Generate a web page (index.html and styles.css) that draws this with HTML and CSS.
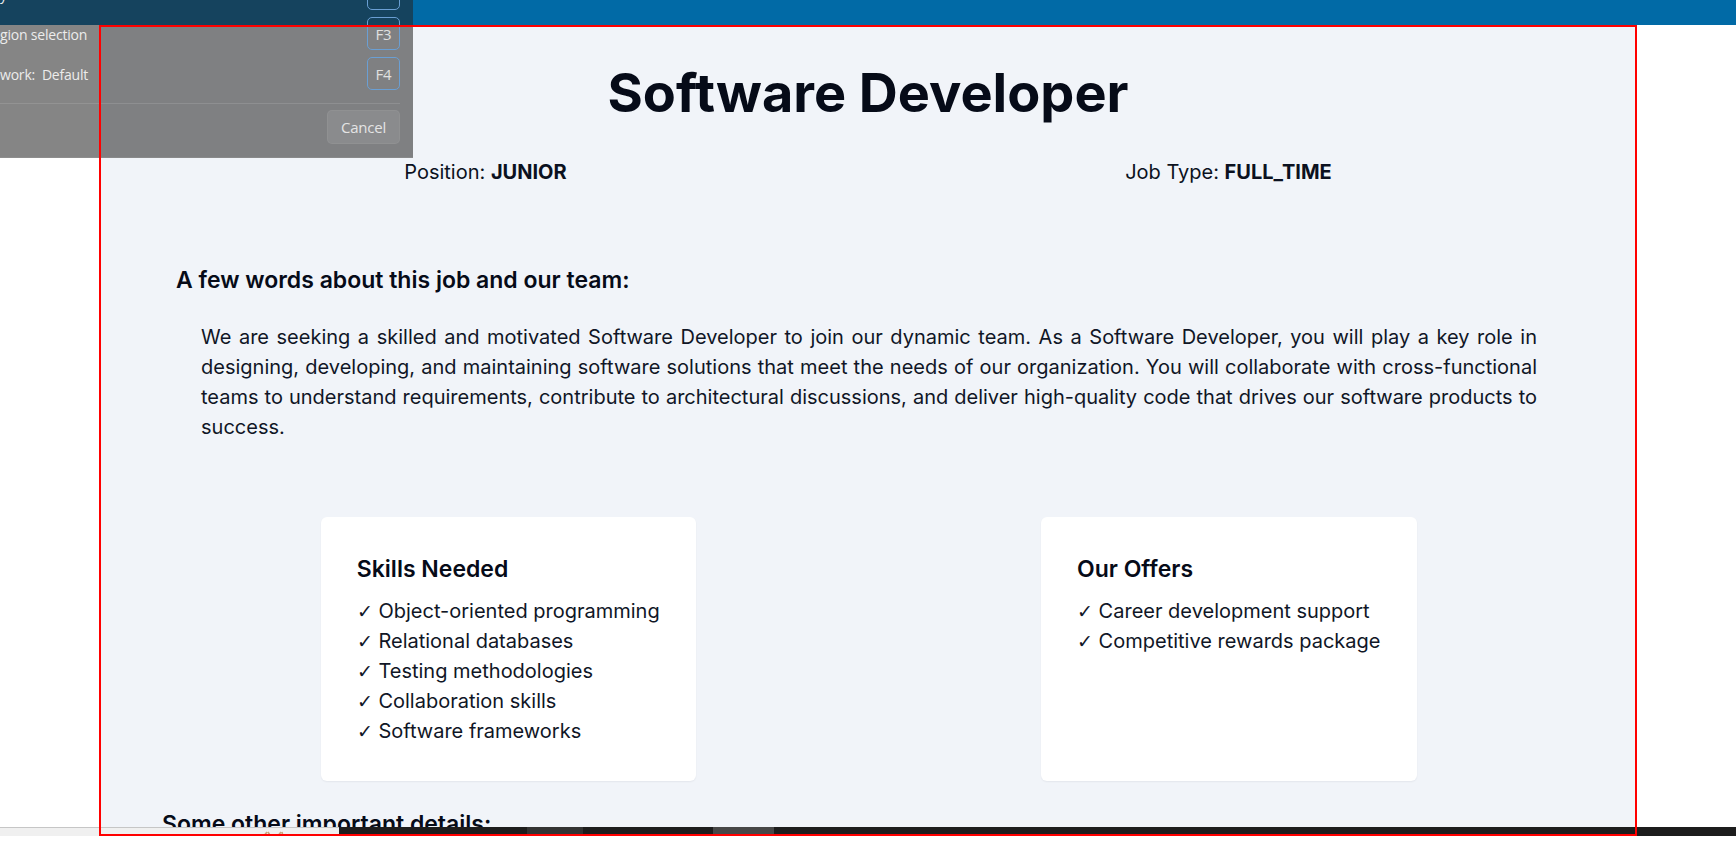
FILE: index.html
```html
<!DOCTYPE html>
<html lang="en">
<head>
<meta charset="utf-8">
<title>Software Developer</title>
<link rel="stylesheet" href="styles.css">
</head>
<body>
<div class="screen">
  <header class="topbar"></header>

  <main class="job">
    <h1 class="job-title">Software Developer</h1>
    <div class="meta">
      <div class="meta-item">Position: <b>JUNIOR</b></div>
      <div class="meta-item">Job Type: <b>FULL_TIME</b></div>
    </div>

    <h2 class="section-title about-title">A few words about this job and our team:</h2>
    <p class="about-text">We are seeking a skilled and motivated Software Developer to join our dynamic team. As a Software Developer, you will play a key role in designing, developing, and maintaining software solutions that meet the needs of our organization. You will collaborate with cross-functional teams to understand requirements, contribute to architectural discussions, and deliver high-quality code that drives our software products to success.</p>

    <div class="cards">
      <section class="card">
        <h3 class="card-title">Skills Needed</h3>
        <ul class="card-list">
          <li><span class="tick">✓</span> Object-oriented programming</li>
          <li><span class="tick">✓</span> Relational databases</li>
          <li><span class="tick">✓</span> Testing methodologies</li>
          <li><span class="tick">✓</span> Collaboration skills</li>
          <li><span class="tick">✓</span> Software frameworks</li>
        </ul>
      </section>
      <section class="card">
        <h3 class="card-title">Our Offers</h3>
        <ul class="card-list">
          <li><span class="tick">✓</span> Career development support</li>
          <li><span class="tick">✓</span> Competitive rewards package</li>
        </ul>
      </section>
    </div>

    <h2 class="section-title other-title">Some other important details:</h2>
  </main>

  <div class="capture-dialog">
    <div class="dialog-rows">
      <div class="dialog-row"><span class="dialog-label">y</span><span class="key"></span></div>
      <div class="dialog-row"><span class="dialog-label">gion selection</span><span class="key">F3</span></div>
      <div class="dialog-row"><span class="dialog-label">work:&nbsp; Default</span><span class="key">F4</span></div>
    </div>
    <div class="dialog-sep"></div>
    <div class="dialog-actions"><span class="cancel-btn">Cancel</span></div>
  </div>

  <div class="taskbar">
    <div class="tb-light">
      <svg class="tb-icon" width="22" height="6" viewBox="0 0 22 6"><path d="M1 6 L5 1 M9 6 L6 1" stroke="#c9a27a" stroke-width="1.6" fill="none"/><path d="M15 6 L19 1 M21 6 L20 1" stroke="#c9a27a" stroke-width="1.6" fill="none"/></svg>
    </div>
    <div class="tb-dark tb-a"></div>
    <div class="tb-dark tb-b"></div>
    <div class="tb-dark tb-c"></div>
    <div class="tb-dark tb-d"></div>
    <div class="tb-dark tb-e"><span class="tb-dots">...</span></div>
  </div>

  <div class="selection"></div>
</div>
</body>
</html>
```

FILE: styles.css
```css
* { box-sizing: border-box; }

html, body {
  margin: 0;
  padding: 0;
  background: #ffffff;
}

body {
  width: 1736px;
  height: 861px;
  overflow: hidden;
  font-family: Inter, "Noto Sans", "DejaVu Sans", sans-serif;
  color: #0b1120;
}

.screen {
  position: relative;
  height: 836px;
  overflow: hidden;
}

.topbar {
  height: 25px;
  background: #016aa6;
}

.job {
  margin: 0 99px;
  height: 811px;
  background: #f1f4f9;
  padding-top: 34px;
}

.job-title {
  margin: 0;
  text-align: center;
  font-size: 54px;
  line-height: 68px;
  font-weight: 700;
  color: #060b18;
}

.meta {
  margin-top: 30px;
  display: flex;
  justify-content: space-around;
  padding: 0 26px;
  font-size: 20px;
  line-height: 30px;
  color: #0b1120;
}

.meta-item b { font-weight: 700; }

.section-title {
  margin: 0;
  font-size: 23px;
  line-height: 32px;
  font-weight: 600;
  color: #060b18;
}

.about-title {
  margin-top: 77px;
  padding-left: 77px;
}

.about-text {
  margin: 26px 0 0;
  padding: 0 100px 0 102px;
  font-size: 20px;
  line-height: 30px;
  text-align: justify;
  color: #101626;
}

.cards {
  margin-top: 75px;
  display: grid;
  grid-template-columns: 1fr 1fr;
  justify-items: center;
  padding: 0 48px 0 49px;
}

.card {
  background: #ffffff;
  border-radius: 6px;
  padding: 36px;
  box-shadow: 0 1px 2px rgba(15, 23, 42, 0.06);
}

.card-title {
  margin: 0 0 10px;
  font-size: 23px;
  line-height: 32px;
  font-weight: 600;
  color: #060b18;
}

.card-list {
  margin: 0;
  padding: 0;
  list-style: none;
  font-size: 20px;
  line-height: 30px;
  color: #101626;
}

.card-list li {
  height: 30px;
  padding-top: 1px;
}

.tick {
  font-family: "DejaVu Sans", sans-serif;
  font-weight: 300;
  font-size: 19px;
  line-height: 1;
}

.other-title {
  margin-top: 27px;
  padding-left: 63px;
}

/* capture dialog overlay */
.capture-dialog {
  position: absolute;
  left: 0;
  top: 0;
  width: 413px;
  height: 158px;
  background: rgba(37, 37, 38, 0.56);
  border-bottom: 1px solid rgba(255, 255, 255, 0.08);
  font-family: "Open Sans", "Noto Sans", sans-serif;
  font-size: 14px;
  letter-spacing: -0.2px;
  color: #ececec;
  overflow: hidden;
}

.dialog-rows {
  margin-top: -23px;
  display: flex;
  flex-direction: column;
  gap: 7px;
  padding-right: 13px;
}

.dialog-row {
  height: 33px;
  display: flex;
  align-items: center;
  justify-content: space-between;
}

.dialog-label {
  line-height: 20px;
  padding-top: 2px;
}

.key {
  width: 33px;
  height: 33px;
  border: 1px solid #6a9fd4;
  border-radius: 5px;
  display: flex;
  align-items: center;
  justify-content: center;
  font-size: 15px;
  color: #e0e0e0;
}

.dialog-sep {
  margin: 13px 13px 0 0;
  height: 1px;
  background: rgba(255, 255, 255, 0.12);
}

.dialog-actions {
  margin-top: 6px;
  padding-right: 13px;
  display: flex;
  justify-content: flex-end;
}

.cancel-btn {
  width: 73px;
  height: 34px;
  border-radius: 5px;
  background: rgba(255, 255, 255, 0.09);
  border: 1px solid rgba(255, 255, 255, 0.05);
  display: flex;
  align-items: center;
  justify-content: center;
  font-size: 15px;
  color: #e4e4e4;
}

/* bottom strip */
.taskbar {
  position: absolute;
  left: 0;
  top: 827px;
  width: 1736px;
  height: 9px;
  display: flex;
}

.tb-light {
  width: 339px;
  background: #f0f0f0;
  border-top: 1px solid #c6c6c6;
  position: relative;
}

.tb-icon {
  position: absolute;
  left: 262px;
  top: 3px;
}

.tb-dark { background: #1d1d1d; }
.tb-a { width: 188px; }
.tb-b { width: 56px; background: #333333; }
.tb-c { width: 130px; }
.tb-d { width: 61px; background: #474747; }
.tb-e { flex: 1; position: relative; }

.tb-dots {
  position: absolute;
  right: 6px;
  top: 1px;
  font-family: "DejaVu Sans", sans-serif;
  font-size: 14px;
  font-weight: 700;
  line-height: 14px;
  color: #ffffff;
  letter-spacing: 1px;
}

/* region selection rectangle */
.selection {
  position: absolute;
  left: 99px;
  top: 25px;
  width: 1538px;
  height: 811px;
  border: 2px solid #ff0000;
  pointer-events: none;
}
```
